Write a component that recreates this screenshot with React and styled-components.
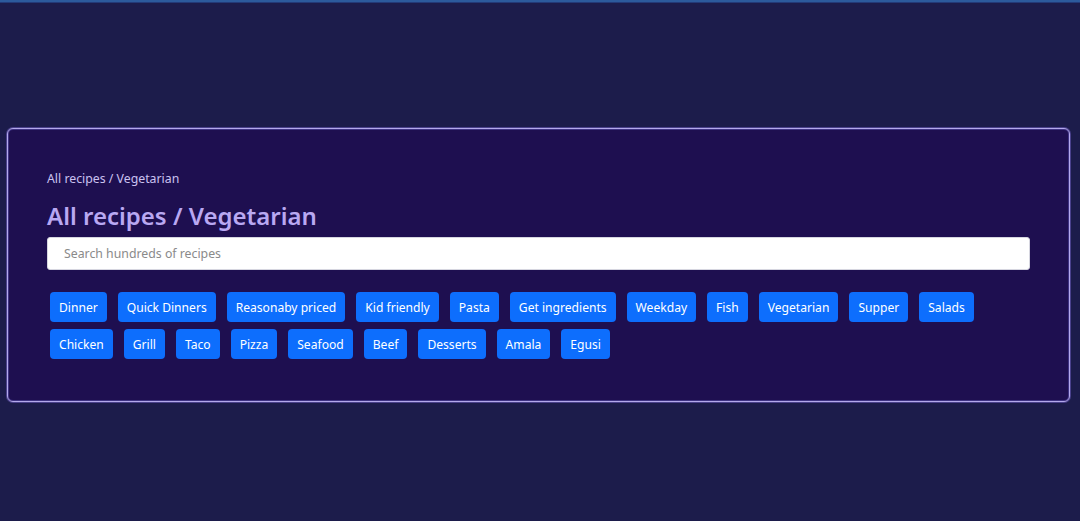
import React from "react";
import styled, { createGlobalStyle } from "styled-components";

const GlobalStyle = createGlobalStyle`
  html, body {
    margin: 0;
    padding: 0;
    background: #1c1c4b;
    font-family: "Noto Sans", "Open Sans", sans-serif;
  }
`;

const tags = [
  "Dinner",
  "Quick Dinners",
  "Reasonaby priced",
  "Kid friendly",
  "Pasta",
  "Get ingredients",
  "Weekday",
  "Fish",
  "Vegetarian",
  "Supper",
  "Salads",
  "Chicken",
  "Grill",
  "Taco",
  "Pizza",
  "Seafood",
  "Beef",
  "Desserts",
  "Amala",
  "Egusi",
];

const App = () => {
  return (
    <Page>
      <GlobalStyle />
      <TopBar />
      <Main>
        <Card>
          <Crumb>All recipes / Vegetarian</Crumb>
          <Title>All recipes / Vegetarian</Title>
          <Search placeholder="Search hundreds of recipes" />
          <Tags>
            {tags.map((t) => (
              <Tag key={t}>{t}</Tag>
            ))}
          </Tags>
        </Card>
      </Main>
    </Page>
  );
};

const Page = styled.div`
  min-height: 521px;
  background: #1c1c4b;
`;

const TopBar = styled.div`
  height: 2px;
  background: #2c5a9c;
  border-bottom: 1px solid #233a78;
`;

const Main = styled.div`
  padding: 125px 10px 0 7px;
`;

const Card = styled.div`
  background: #1e0f50;
  border: 1px solid #b4a9ec;
  border-radius: 6px;
  box-shadow: inset 0 0 0 1px #3f3384, 0 0 0 1px #4a418c;
  padding: 41px 39px 42px 39px;
`;

const Crumb = styled.div`
  color: #cbc2f0;
  font-size: 12.3px;
  line-height: 18px;
`;

const Title = styled.h1`
  margin: 13px 0 6px;
  color: #b9a8f2;
  font-size: 24px;
  font-weight: 600;
  line-height: 30px;
`;

const Search = styled.input`
  display: block;
  box-sizing: border-box;
  width: 100%;
  height: 33px;
  padding: 0 16px;
  border: 1px solid #d6d6e0;
  border-radius: 3px;
  background: #fff;
  font-family: inherit;
  font-size: 12.3px;
  outline: none;

  &::placeholder {
    color: #8a8a8a;
  }
`;

const Tags = styled.div`
  display: flex;
  flex-wrap: wrap;
  gap: 7px 11px;
  margin-top: 22px;
  padding-left: 3px;
`;

const Tag = styled.button`
  height: 30px;
  padding: 0 9px;
  border: none;
  border-radius: 4px;
  background: #0d6efd;
  color: #fff;
  font-family: inherit;
  font-size: 12.1px;
  cursor: pointer;
`;

export default App;
